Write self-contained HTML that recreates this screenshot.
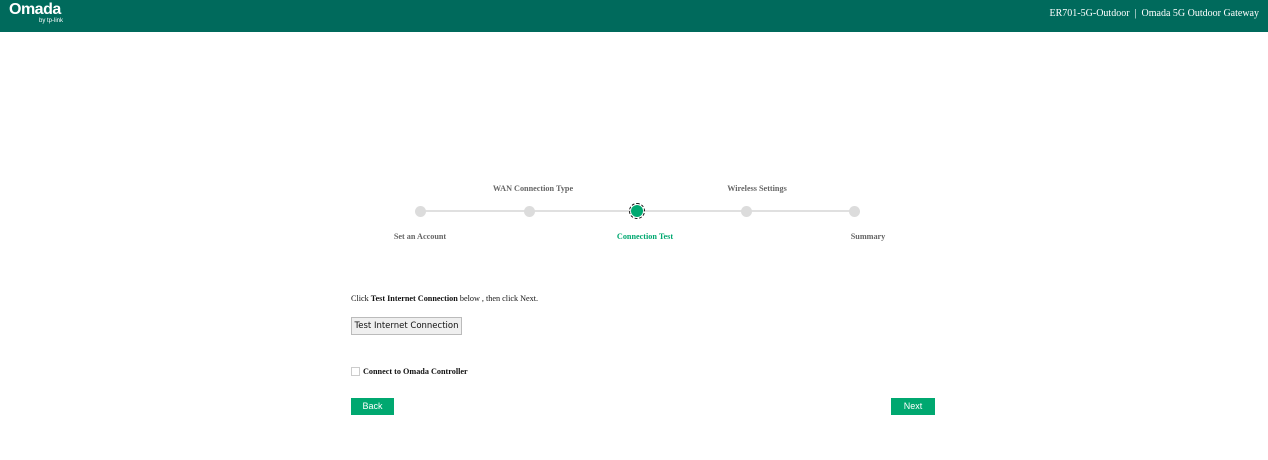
<!DOCTYPE html>
<html><head><style>
body{margin:0;width:1268px;height:460px;background:#fff;font-family:"Liberation Serif",serif;position:relative;overflow:hidden}
.hdr{position:absolute;left:0;top:0;width:1268px;height:32px;background:#006a5c}
.logo{position:absolute;left:9px;top:1px;color:#fff;font-family:"Liberation Sans",sans-serif;font-size:16px;font-weight:bold;letter-spacing:-0.5px}
.by{position:absolute;left:39px;top:18px;color:#fff;font-family:"Liberation Sans",sans-serif;font-size:6px}
.ttl{position:absolute;right:9px;top:8px;color:#fff;font-size:10px}
.ab{position:absolute;font-size:8.2px;font-weight:bold;color:#666;white-space:nowrap;transform:translateX(-50%)}
.dot{position:absolute;width:11px;height:11px;border-radius:50%;background:#dcdcdc;top:206px}
.line{position:absolute;left:420px;top:210px;width:434px;height:2px;background:#e0e0e0}
.t{position:absolute;font-size:8.2px;color:#111}
.btn{position:absolute;background:#00a870;color:#fff;font-family:"Liberation Sans",sans-serif;font-size:9px;text-align:center;line-height:17px;height:17px}
</style></head><body>
<div class="hdr"><div class="logo">Omada</div><div class="by">by tp-link</div>
<div class="ttl">ER701-5G-Outdoor &nbsp;| &nbsp;Omada 5G Outdoor Gateway</div></div>
<div class="line"></div>
<div class="dot" style="left:415px"></div>
<div class="dot" style="left:524px"></div>
<div style="position:absolute;left:631px;top:205px;width:12px;height:12px;border-radius:50%;background:#00a870"></div>
<div style="position:absolute;left:628.5px;top:202.5px;width:14px;height:14px;border-radius:50%;border:1.5px dashed #111;"></div>
<div class="dot" style="left:741px"></div>
<div class="dot" style="left:849px"></div>
<div class="ab" style="left:533px;top:184px">WAN Connection Type</div>
<div class="ab" style="left:757px;top:184px">Wireless Settings</div>
<div class="ab" style="left:420px;top:232px">Set an Account</div>
<div class="ab" style="left:645px;top:232px;color:#00a870">Connection Test</div>
<div class="ab" style="left:868px;top:232px">Summary</div>
<div class="t" style="left:351px;top:294px">Click <b>Test Internet Connection</b> below , then click Next.</div>
<div style="position:absolute;left:351px;top:317px;width:109px;height:16px;background:#efefef;border:1px solid #bbb;font-family:'DejaVu Sans',sans-serif;font-size:8.5px;line-height:16px;text-align:center;color:#111">Test Internet Connection</div>
<div style="position:absolute;left:351px;top:367px;width:7px;height:7px;border:1px solid #ccc"></div>
<div class="t" style="left:363px;top:367px;font-weight:bold">Connect to Omada Controller</div>
<div class="btn" style="left:351px;top:398px;width:43px">Back</div>
<div class="btn" style="left:891px;top:398px;width:44px">Next</div>
</body></html>
